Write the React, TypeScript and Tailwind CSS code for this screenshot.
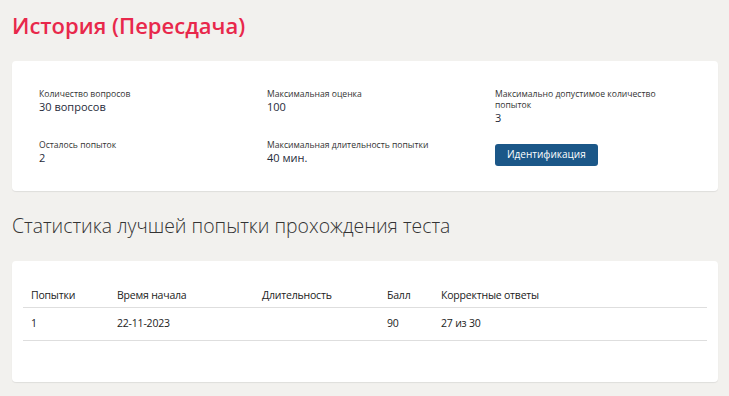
import React from 'react'

const info = [
  { label: 'Количество вопросов', value: '30 вопросов' },
  { label: 'Максимальная оценка', value: '100' },
  { label: 'Максимально допустимое количество попыток', value: '3' },
  { label: 'Осталось попыток', value: '2' },
  { label: 'Максимальная длительность попытки', value: '40 мин.' },
]

const rows = [{ attempt: '1', start: '22-11-2023', duration: '', score: '90', correct: '27 из 30' }]

export default function App() {
  return (
    <div
      className="min-h-[396px] w-[729px] bg-[#f2f1ee] px-3 pt-[10px] pb-3 text-[#222]"
      style={{ fontFamily: '"Open Sans", "Noto Sans", sans-serif' }}
    >
      <h1 className="text-[22px] font-semibold leading-[30px] text-[#e8284b]">История (Пересдача)</h1>

      <div className="mt-[21px] h-[130px] w-[706px] rounded bg-white pl-[27px] pt-[28px] shadow-[0_1px_1px_rgba(0,0,0,0.08)]">
        <div className="grid grid-cols-[228px_228px_200px] gap-y-[15px]">
          {info.map((item) => (
            <div key={item.label} className="pr-6">
              <div className="text-[8.6px] leading-[11px] text-[#333]">{item.label}</div>
              <div className="text-[11px] leading-[14px] text-[#1f2b3a]">{item.value}</div>
            </div>
          ))}
          <div>
            <button className="-mt-[2px] h-[22px] rounded-[3px] bg-[#1b5788] px-3 text-[10px] text-white">
              Идентификация
            </button>
          </div>
        </div>
      </div>

      <h2 className="mt-[22px] text-[19.4px] font-light leading-[26px] text-[#333]">
        Статистика лучшей попытки прохождения теста
      </h2>

      <div className="mt-[22px] h-[121px] w-[706px] rounded bg-white px-[11px] pt-[24px] shadow-[0_1px_1px_rgba(0,0,0,0.08)]">
        <table className="w-full border-collapse text-left text-[10.5px] tracking-[-0.2px] text-[#222]">
          <thead>
            <tr className="border-b border-[#dedede]">
              <th className="h-[22px] w-[94px] pl-2 font-normal">Попытки</th>
              <th className="w-[145px] font-normal">Время начала</th>
              <th className="w-[125px] font-normal">Длительность</th>
              <th className="w-[54px] font-normal">Балл</th>
              <th className="font-normal">Корректные ответы</th>
            </tr>
          </thead>
          <tbody>
            {rows.map((r) => (
              <tr key={r.attempt} className="border-b border-[#dedede]">
                <td className="h-[33px] pl-2">{r.attempt}</td>
                <td>{r.start}</td>
                <td>{r.duration}</td>
                <td>{r.score}</td>
                <td>{r.correct}</td>
              </tr>
            ))}
          </tbody>
        </table>
      </div>
    </div>
  )
}
